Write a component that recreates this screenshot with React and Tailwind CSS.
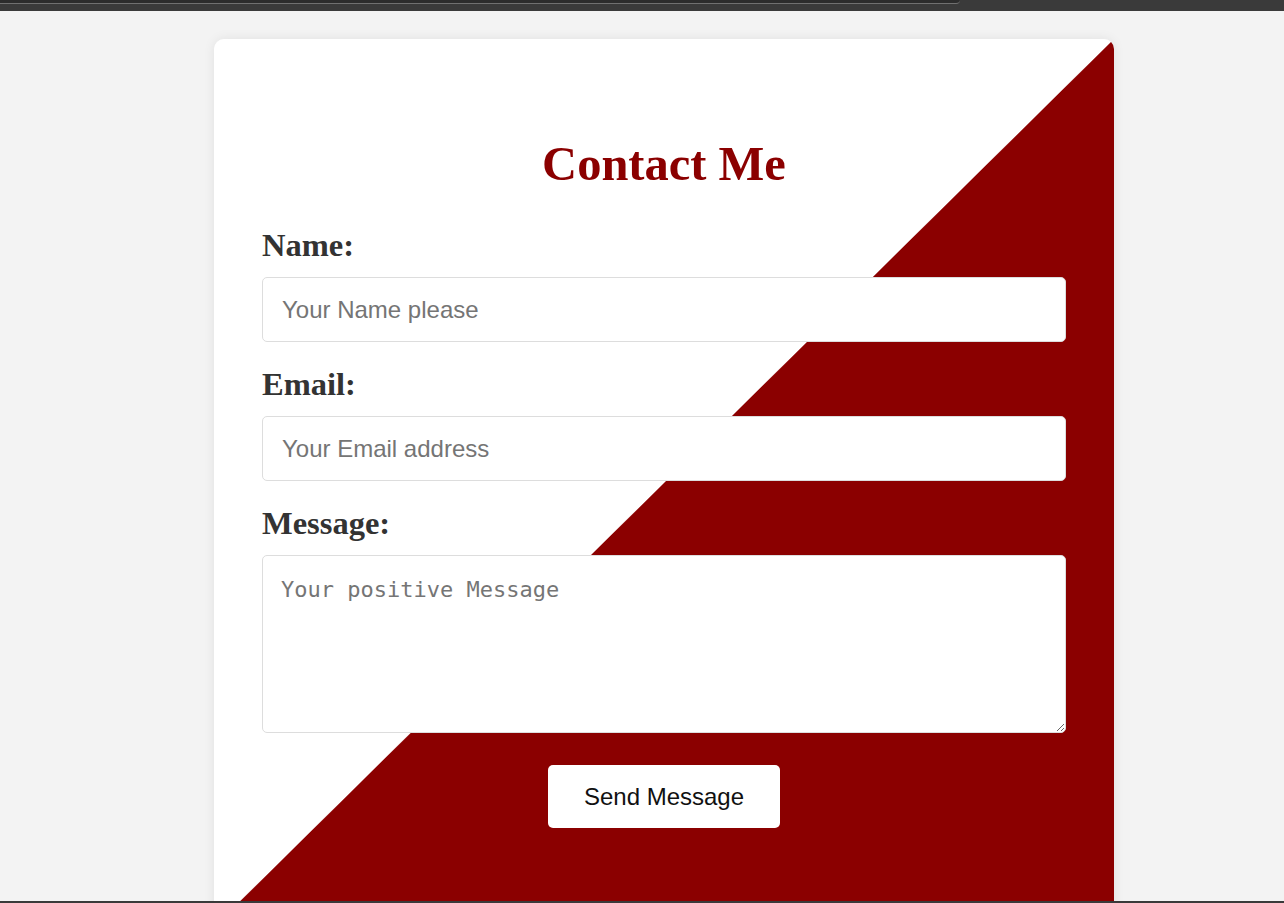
import React from "react";

export default function App() {
  const serif = "font-['Liberation_Serif','Times_New_Roman',serif]";
  const sans = "font-['Liberation_Sans',Arial,sans-serif]";
  return (
    <div className="relative h-[903px] w-full overflow-hidden bg-[#f3f3f3]">
      <div className="h-[11px] w-full bg-[#3a3a3a]">
        <div className="h-[4px] w-[960px] rounded-br-[6px] border-b border-[#707070] bg-[#2c2c2c]" />
      </div>
      <div className="ml-[214px] mt-[28px] w-[900px] rounded-[10px] bg-[linear-gradient(to_bottom_right,#ffffff_calc(50%-0.5px),#8b0000_calc(50%+0.5px))] px-[48px] pb-[99px] pt-[97px] shadow-[0_0_12px_rgba(0,0,0,0.08)]">
        <h1 className={`${serif} text-center text-[48.5px] font-bold leading-[55px] text-[#8b0000]`}>
          Contact Me
        </h1>
        <form className="mt-[36px]" onSubmit={(e) => e.preventDefault()}>
          <label className={`${serif} mb-[14px] block text-[32.5px] font-bold leading-[36px] text-[#333333]`}>
            Name:
          </label>
          <input
            type="text"
            placeholder="Your Name please"
            className={`${sans} mb-[24px] block h-[65px] w-full rounded-[5px] border border-[#dddddd] bg-white px-[19px] text-[24px] text-[#222] outline-none placeholder:text-[#757575]`}
          />
          <label className={`${serif} mb-[14px] block text-[32.5px] font-bold leading-[36px] text-[#333333]`}>
            Email:
          </label>
          <input
            type="email"
            placeholder="Your Email address"
            className={`${sans} mb-[24px] block h-[65px] w-full rounded-[5px] border border-[#dddddd] bg-white px-[19px] text-[24px] text-[#222] outline-none placeholder:text-[#757575]`}
          />
          <label className={`${serif} mb-[14px] block text-[32.5px] font-bold leading-[36px] text-[#333333]`}>
            Message:
          </label>
          <textarea
            placeholder="Your positive Message"
            className="block h-[178px] w-full rounded-[5px] border border-[#dddddd] bg-white px-[18px] pt-[21px] font-['DejaVu_Sans_Mono',monospace] text-[22px] leading-[26px] text-[#222] outline-none placeholder:text-[#757575]"
          />
          <div className="mt-[32px] flex justify-center">
            <button
              type="submit"
              className={`${sans} h-[63px] w-[232px] rounded-[5px] bg-white text-[24px] text-[#111111]`}
            >
              Send Message
            </button>
          </div>
        </form>
      </div>
      <div className="absolute bottom-0 left-0 h-[2px] w-full bg-[#3a3a3a]" />
    </div>
  );
}
